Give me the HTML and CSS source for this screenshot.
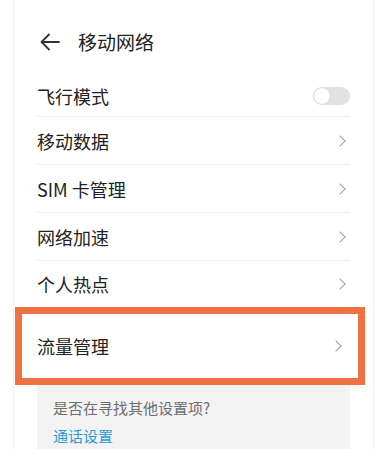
FILE: index.html
```html
<!DOCTYPE html>
<html>
<head>
    <meta charset="UTF-8">
    <meta name="viewport" content="width=device-width, initial-scale=1.0">
    <title>移动网络</title>
    <link rel="stylesheet" href="styles.css">
</head>
<body>
    <div class="screen">
        <div class="header">
            <svg class="back" width="20" height="18" viewBox="0 0 20 18">
                <path d="M9 1.5 L1.5 9 L9 16.5 M1.5 9 H19" fill="none" stroke="#333" stroke-width="1.8" stroke-linecap="round" stroke-linejoin="round"/>
            </svg>
            <div class="title">移动网络</div>
        </div>
        <div class="list">
            <div class="row first">
                <span>飞行模式</span>
                <div class="toggle"><div class="knob"></div></div>
            </div>
            <div class="row">
                <span>移动数据</span>
                <span class="chevron"></span>
            </div>
            <div class="row">
                <span>SIM 卡管理</span>
                <span class="chevron"></span>
            </div>
            <div class="row">
                <span>网络加速</span>
                <span class="chevron"></span>
            </div>
            <div class="row last">
                <span>个人热点</span>
                <span class="chevron"></span>
            </div>
        </div>
        <div class="highlight">
            <span>流量管理</span>
            <span class="chevron"></span>
        </div>
        <div class="hint">
            <div class="hint-text">是否在寻找其他设置项?</div>
            <div class="hint-link">通话设置</div>
        </div>
    </div>
</body>
</html>
```

FILE: styles.css
```css
body {
    margin: 0;
    background: #fff;
    font-family: "Noto Sans CJK SC", "Noto Sans", sans-serif;
    color: #222;
}
.screen {
    margin-left: 13px;
    width: 359px;
    height: 449px;
    border-left: 1px solid #f0f0f0;
    border-right: 1px solid #f0f0f0;
    overflow: hidden;
}
.header {
    height: 75px;
    display: flex;
    align-items: center;
    padding-left: 26px;
    padding-top: 8px;
    box-sizing: border-box;
}
.back {
    display: block;
}
.title {
    margin-left: 18px;
    font-size: 19px;
    color: #222;
}
.list {
    padding: 0 23px;
}
.row {
    height: 47px;
    display: flex;
    align-items: center;
    justify-content: space-between;
    border-bottom: 1px solid #ececec;
    font-size: 18px;
}
.row.first {
    height: 41px;
}
.row.last {
    height: 46px;
    border-bottom: none;
}
.chevron {
    width: 7px;
    height: 7px;
    border-top: 1.4px solid #a0a0a0;
    border-right: 1.4px solid #a0a0a0;
    transform: rotate(45deg);
    margin-right: 6px;
}
.toggle {
    width: 37px;
    height: 18px;
    border-radius: 9px;
    background: #e2e2e2;
    position: relative;
}
.knob {
    position: absolute;
    left: 1px;
    top: 1px;
    width: 16px;
    height: 16px;
    border-radius: 50%;
    background: #fff;
    box-shadow: 0 0 1px rgba(0, 0, 0, 0.25);
}
.highlight {
    margin: 0 8px 0 1px;
    height: 78px;
    box-sizing: border-box;
    border: 7px solid #f07242;
    display: flex;
    align-items: center;
    justify-content: space-between;
    padding: 0 12px 0 15px;
    font-size: 18px;
}
.hint {
    margin: 0 23px;
    background: #f3f3f3;
    padding: 12px 16px;
    height: 80px;
}
.hint-text {
    font-size: 15px;
    color: #6e6e6e;
}
.hint-link {
    margin-top: 7px;
    font-size: 15px;
    color: #2b9bd6;
}
```
